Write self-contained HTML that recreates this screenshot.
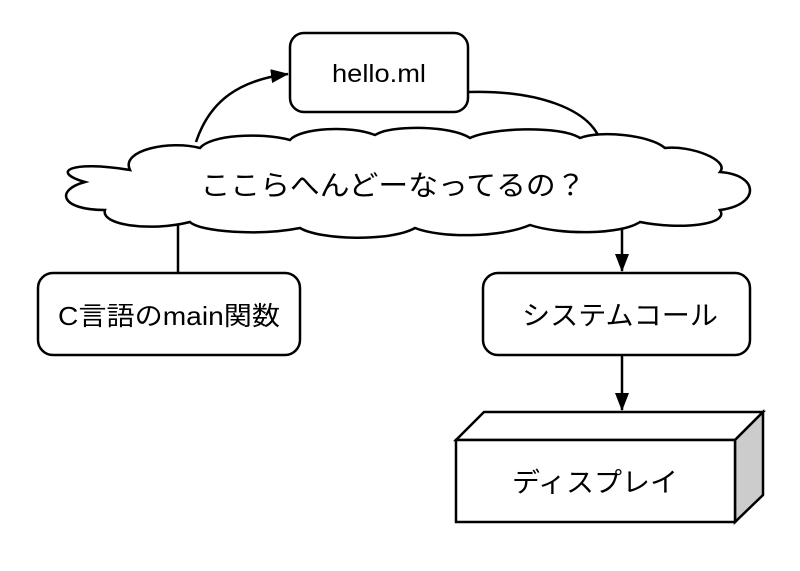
<!DOCTYPE html>
<html><head><meta charset="utf-8"><style>
body{margin:0;background:#fff;width:800px;height:566px;overflow:hidden}
svg text{font-family:"Liberation Sans","Noto Sans CJK JP",sans-serif;fill:#000}
</style></head><body>
<svg width="800" height="566" viewBox="0 0 800 566" xmlns="http://www.w3.org/2000/svg">
<defs><marker id="a" markerWidth="18" markerHeight="14" refX="17" refY="7" orient="auto" markerUnits="userSpaceOnUse"><path d="M0,0 L18,7 L0,14 Z" fill="#000"/></marker></defs>
<g fill="none" stroke="#000" stroke-width="2.5">
<path d="M196,142 C210,100 240,80 288,74" marker-end="url(#a)"/>
<path d="M468,92 C540,90 585,110 598,135"/>
<rect x="290" y="33" width="178" height="79" rx="14" fill="#fff"/>
<path d="M178,222 L178,272"/>
<path d="M622,222 L622,271" marker-end="url(#a)"/>
<path d="M622,355 L622,410" marker-end="url(#a)"/>
<path d="M130,170 C120,150 170,140 200,148 C210,135 260,132 290,140 C300,128 350,125 375,135 C390,125 450,125 470,138 C490,128 560,125 580,138 C600,130 650,135 665,148 C690,145 730,160 720,172 C760,175 760,205 720,210 C730,225 680,230 640,222 C620,235 560,235 530,225 C500,238 440,238 415,228 C390,242 320,240 300,228 C260,236 200,232 190,222 C150,232 100,225 105,210 C60,210 55,190 85,182 C50,172 70,160 130,170 Z" fill="#fff"/>
<rect x="38" y="273" width="262" height="82" rx="15" fill="#fff"/>
<rect x="483" y="273" width="267" height="82" rx="15" fill="#fff"/>
<path d="M456,440 L484,412 L763,412 L735,440 Z" fill="#fff"/>
<path d="M735,440 L763,412 L763,495 L735,522 Z" fill="#ccc"/>
<rect x="456" y="440" width="279" height="82" fill="#fff"/>
</g>
<text x="379" y="82" font-size="25" text-anchor="middle" textLength="94" lengthAdjust="spacingAndGlyphs">hello.ml</text>
<text x="393" y="195" font-size="28" text-anchor="middle" textLength="385" lengthAdjust="spacingAndGlyphs">ここらへんどーなってるの？</text>
<text x="169" y="325" font-size="26" text-anchor="middle" textLength="222" lengthAdjust="spacingAndGlyphs">C言語のmain関数</text>
<text x="620" y="325" font-size="27" text-anchor="middle" textLength="196" lengthAdjust="spacingAndGlyphs">システムコール</text>
<text x="595" y="492" font-size="27" text-anchor="middle" textLength="166" lengthAdjust="spacingAndGlyphs">ディスプレイ</text>
</svg>
</body></html>
